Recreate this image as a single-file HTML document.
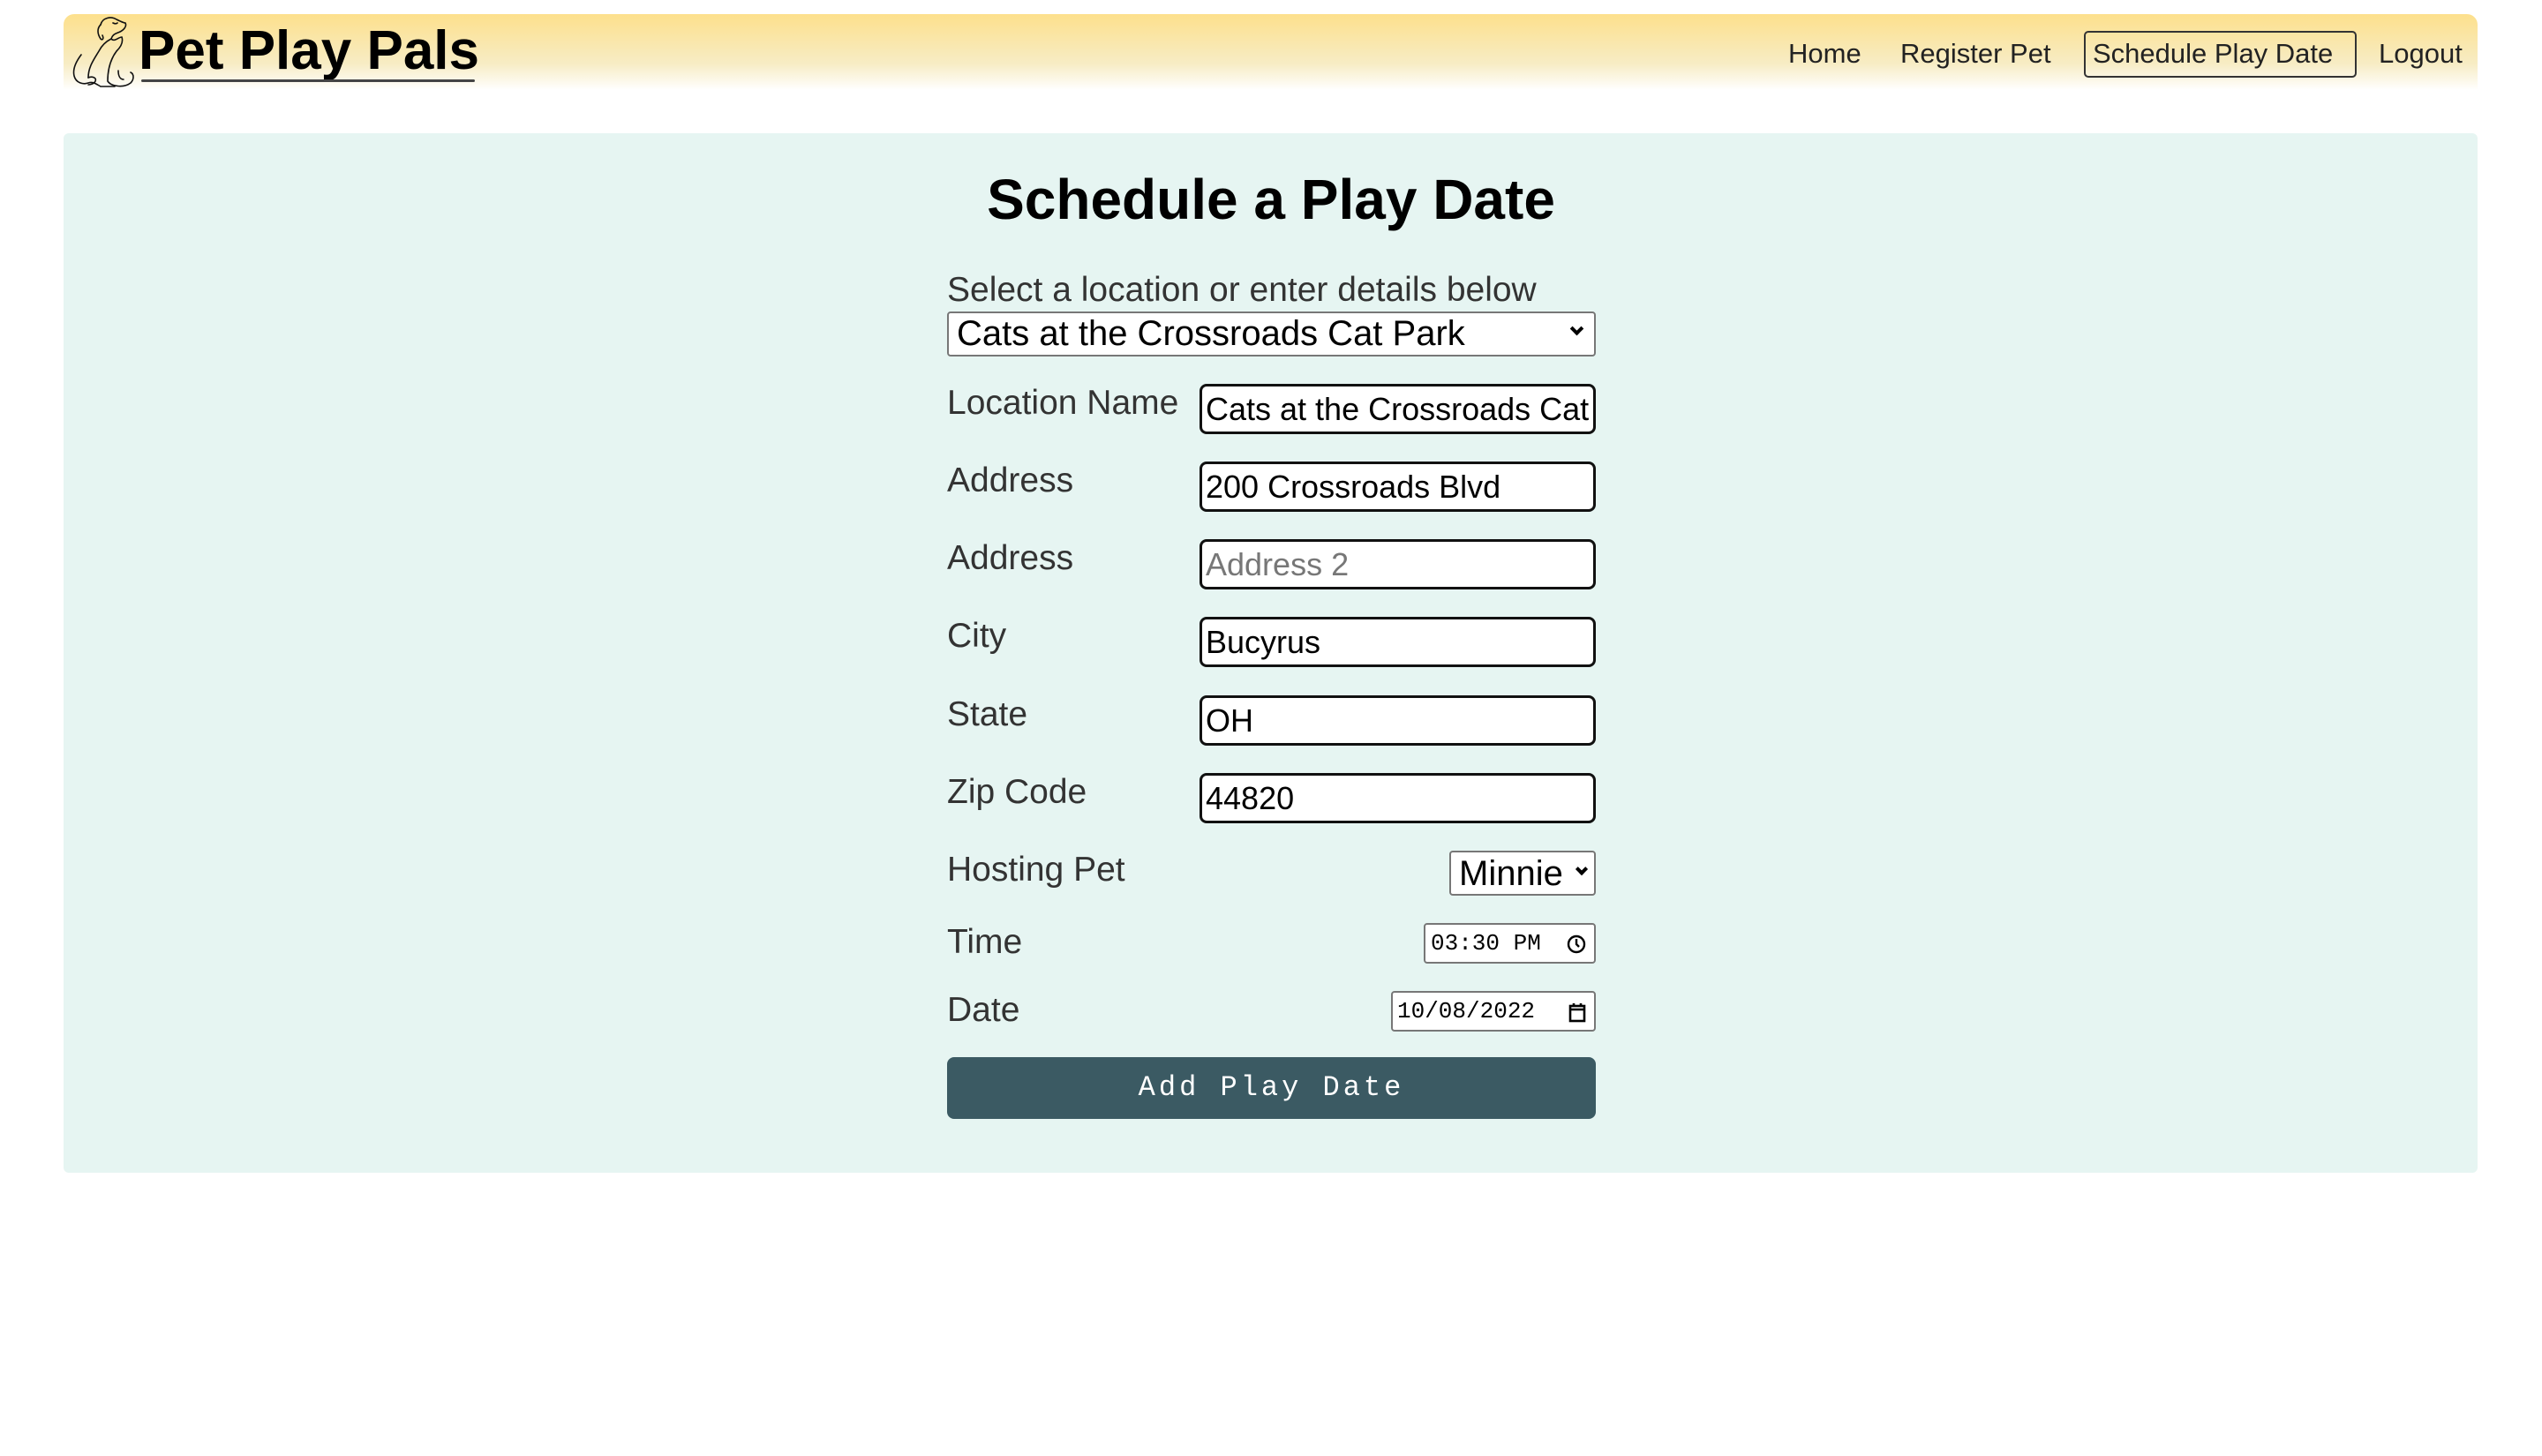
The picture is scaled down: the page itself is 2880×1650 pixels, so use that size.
<!DOCTYPE html>
<html><head><meta charset="utf-8"><style>
*{box-sizing:border-box;margin:0;padding:0}
body{width:2880px;height:1650px;background:#fff;font-family:"Liberation Sans",Arial,sans-serif;position:relative;overflow:hidden}
.hdr{position:absolute;left:72px;top:16px;width:2735px;height:86px;border-radius:12px 12px 0 0;background:linear-gradient(#fde08c,#f7ecc4 65%,#fff)}
.logo{position:absolute;left:157px;top:22px;font-size:62px;font-weight:bold;color:#000}
.uline{position:absolute;left:160px;top:90px;width:378px;height:3px;background:#444;border-radius:2px}
.nav{position:absolute;top:42px;font-size:31px;color:#222;line-height:38px}
.navbox{position:absolute;left:2361px;top:35px;width:309px;height:53px;border:2px solid #333;border-radius:5px}
.panel{position:absolute;left:72px;top:151px;width:2735px;height:1178px;background:#e6f5f2;border-radius:6px}
h1{position:absolute;left:0;width:2880px;top:189px;text-align:center;font-size:64px;font-weight:bold;color:#000}
.lbl{position:absolute;left:1073px;font-size:39px;color:#333;line-height:44px}
.inp{position:absolute;left:1359px;width:449px;height:57px;background:#fff;border:3px solid #111;border-radius:8px;font-size:36px;color:#000;padding-left:4px;line-height:51px;white-space:nowrap;overflow:hidden}
.sel{position:absolute;background:#fff;border:2px solid #777;border-radius:4px;color:#000;font-size:40px;white-space:nowrap;overflow:hidden}
.mono{font-family:"Liberation Mono","DejaVu Sans Mono",monospace}
.chev{position:absolute;width:11px;height:11px;border-right:4px solid #000;border-bottom:4px solid #000;transform:rotate(45deg)}
.btn{position:absolute;left:1073px;top:1198px;width:735px;height:70px;background:#3b5a63;border-radius:8px;color:#fff;font-size:32px;text-align:center;line-height:70px;letter-spacing:4px}
</style></head><body>
<div class="hdr"></div>
<svg style="position:absolute;left:70px;top:14px" width="90" height="88" viewBox="0 0 90 88" fill="none" stroke="#111" stroke-width="1.6" stroke-linecap="round">
<path d="M44 14 C46 6 56 4 62 8 C66 10 70 12 72 12 C74 16 70 20 66 22 C62 24 58 24 56 30 C52 32 46 36 42 44 C36 54 30 62 30 74"/>
<path d="M44 14 C40 18 40 24 44 30 C46 32 48 30 46 26"/>
<path d="M56 30 C60 34 64 28 68 28 C70 34 66 40 62 44 C56 52 52 62 52 78 C56 84 70 86 78 80 C82 76 82 70 78 68"/>
<path d="M22 48 C16 56 12 64 14 72 C16 80 24 82 30 80 C36 78 40 82 44 84 L60 84"/>
<path d="M30 74 C34 72 40 74 38 78 C36 82 30 82 30 82"/>
<path d="M64 66 C64 72 66 76 70 76"/>
<path d="M58 12 C60 13 62 13 63 12"/>
</svg>
<div class="logo">Pet Play Pals</div>
<div class="uline"></div>
<div class="nav" style="left:2026px">Home</div>
<div class="nav" style="left:2153px">Register Pet</div>
<div class="navbox"></div>
<div class="nav" style="left:2371px">Schedule Play Date</div>
<div class="nav" style="left:2695px">Logout</div>

<div class="panel"></div>
<h1>Schedule a Play Date</h1>
<div class="lbl" style="top:307px">Select a location or enter details below</div>
<div class="sel" style="left:1073px;top:353px;width:735px;height:51px;line-height:46px;padding-left:9px">Cats at the Crossroads Cat Park<span class="chev" style="right:14px;top:12px"></span></div>

<div class="lbl" style="top:435px">Location Name</div>
<div class="inp" style="top:435px">Cats at the Crossroads Cat Park</div>
<div class="lbl" style="top:523px">Address</div>
<div class="inp" style="top:523px">200 Crossroads Blvd</div>
<div class="lbl" style="top:611px">Address</div>
<div class="inp" style="top:611px;color:#777">Address 2</div>
<div class="lbl" style="top:699px">City</div>
<div class="inp" style="top:699px">Bucyrus</div>
<div class="lbl" style="top:788px">State</div>
<div class="inp" style="top:788px">OH</div>
<div class="lbl" style="top:876px">Zip Code</div>
<div class="inp" style="top:876px">44820</div>

<div class="lbl" style="top:964px">Hosting Pet</div>
<div class="sel" style="left:1642px;top:964px;width:166px;height:51px;line-height:48px;padding-left:9px">Minnie<span class="chev" style="right:9px;top:14px;width:10px;height:10px"></span></div>

<div class="lbl" style="top:1046px">Time</div>
<div class="sel mono" style="left:1613px;top:1046px;width:195px;height:46px;font-size:26px;line-height:42px;padding-left:6px">03:30 PM
<svg style="position:absolute;right:9px;top:11px" width="22" height="22" viewBox="0 0 22 22" fill="none" stroke="#000" stroke-width="2.4"><circle cx="11" cy="11" r="9"/><path d="M11 5v6l3 3"/></svg></div>

<div class="lbl" style="top:1123px">Date</div>
<div class="sel mono" style="left:1576px;top:1123px;width:232px;height:46px;font-size:26px;line-height:42px;padding-left:5px">10/08/2022
<svg style="position:absolute;right:9px;top:10px" width="20" height="24" viewBox="0 0 20 24" fill="none" stroke="#000" stroke-width="2.6"><rect x="2" y="5" width="16" height="17"/><path d="M2 9h16M6 2v4M14 2v4"/></svg></div>

<div class="btn mono">Add Play Date</div>
</body></html>
